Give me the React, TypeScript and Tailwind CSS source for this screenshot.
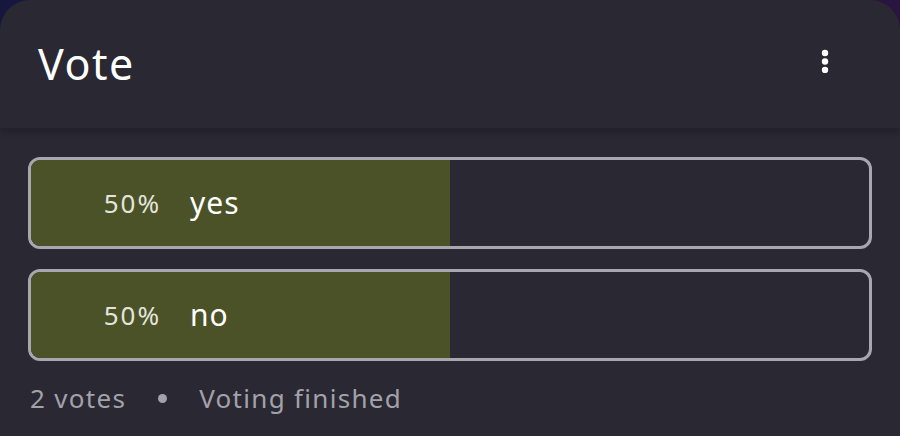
const options = [
  { label: "yes", percent: 50 },
  { label: "no", percent: 50 },
]

const KebabIcon = () => (
  <svg width="8" height="24" viewBox="0 0 8 24" fill="white">
    <circle cx="4" cy="4" r="3.2" />
    <circle cx="4" cy="12.5" r="3.2" />
    <circle cx="4" cy="21" r="3.2" />
  </svg>
)

export default function App() {
  return (
    <div
      className="w-[900px] h-[436px] overflow-hidden bg-gradient-to-r from-[#17163f] via-[#1d1640] to-[#2a1440]"
      style={{ fontFamily: "'Noto Sans', Lato, sans-serif" }}
    >
      <div className="h-[460px] rounded-t-[30px] bg-[#2a2832] flex flex-col">
        <div className="h-[128px] flex items-center justify-between pl-[38px] pr-[71px] relative shadow-[0_5px_6px_rgba(0,0,0,0.18)] z-10">
          <h1 className="text-[43px] leading-none tracking-[1.5px] text-white pb-[2px]">Vote</h1>
          <button className="-mt-[6px]">
            <KebabIcon />
          </button>
        </div>

        <div className="px-[28px] pt-[29px] flex flex-col gap-[20px]">
          {options.map((o) => (
            <div
              key={o.label}
              className="h-[92px] rounded-[12px] border-[3px] border-[#a8a6ae] overflow-hidden relative"
            >
              <div
                className="absolute inset-y-0 left-0 bg-[#4b5228]"
                style={{ width: `${o.percent}%` }}
              />
              <div className="relative h-full flex items-center">
                <span className="w-[130px] text-right text-[26px] leading-none tracking-[2px] text-[#e4e4dc]">{o.percent}%</span>
                <span className="ml-[29px] text-[30px] leading-none tracking-[1px] text-white">{o.label}</span>
              </div>
            </div>
          ))}
        </div>

        <div className="pl-[30px] pt-[24px] flex items-center text-[26px] leading-none tracking-[1.3px] text-[#a3a1aa]">
          <span>2 votes</span>
          <span className="mx-[32px] w-[9px] h-[9px] rounded-full bg-[#a3a1aa]" />
          <span>Voting finished</span>
        </div>
      </div>
    </div>
  )
}
